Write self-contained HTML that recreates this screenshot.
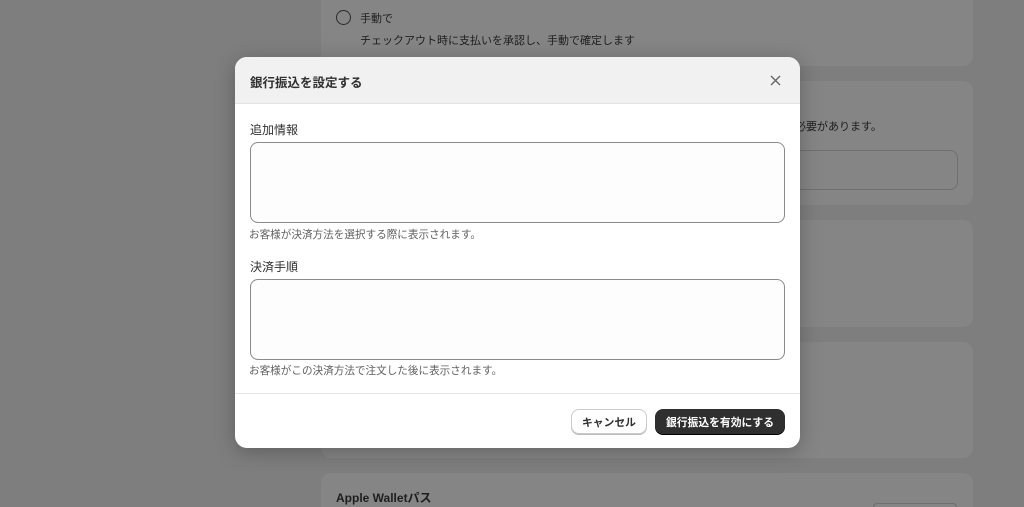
<!DOCTYPE html>
<html><head><meta charset="utf-8"><style>
*{box-sizing:border-box;margin:0;padding:0}
html,body{width:1024px;height:507px;overflow:hidden}
body{background:#7e7e7e;font-family:"Liberation Sans","Noto Sans CJK JP",sans-serif;position:relative}
.card{position:absolute;left:321px;width:652px;background:#858585;border-radius:10px}
.t{position:absolute;color:#1e1e1e;font-size:11px}
.modal{position:absolute;left:235px;top:57px;width:565px;height:391px;background:#fff;border-radius:12px;overflow:hidden;box-shadow:0 4px 20px rgba(0,0,0,.25)}
.hd{height:47px;background:#f1f1f1;border-bottom:1px solid #e3e3e3;position:relative}
.hd h1{position:absolute;left:15px;top:15px;font-size:12.5px;font-weight:bold;color:#303030}
.x{position:absolute;right:19px;top:18px}
.lbl{position:absolute;left:15px;font-size:12px;color:#303030}
.ta{position:absolute;left:15px;width:535px;height:81px;border:1px solid #8a8a8a;border-radius:8px;background:#fdfdfd}
.help{position:absolute;left:14px;font-size:10.6px;color:#616161}
.ft{position:absolute;left:0;top:336px;width:100%;border-top:1px solid #e3e3e3}
.btn{position:absolute;top:352px;height:25px;border-radius:8px;font-size:10.8px;font-weight:bold;display:flex;align-items:center;justify-content:center}
</style></head><body>
<div class="card" style="top:0;height:66px;border-radius:0 0 10px 10px"></div>
<div style="position:absolute;left:336px;top:10px;width:15px;height:15px;border:1.5px solid #2a2a2a;border-radius:50%"></div>
<div class="t" style="left:360px;top:10px">手動で</div>
<div class="t" style="left:360px;top:32px">チェックアウト時に支払いを承認し、手動で確定します</div>
<div class="card" style="top:81px;height:124px"></div>
<div class="t" style="left:795px;top:118px">必要があります。</div>
<div style="position:absolute;left:780px;top:150px;width:178px;height:40px;border:1px solid #6f6f6f;border-radius:8px"></div>
<div class="card" style="top:220px;height:107px"></div>
<div class="card" style="top:342px;height:116px"></div>
<div class="card" style="top:473px;height:34px;border-radius:10px 10px 0 0"></div>
<div class="t" style="left:336px;top:489px;font-weight:bold;font-size:12px">Apple Walletパス</div>
<div style="position:absolute;left:873px;top:503px;width:84px;height:4px;border:1px solid #6f6f6f;border-bottom:none;border-radius:8px 8px 0 0"></div>
<div class="modal">
<div class="hd"><h1>銀行振込を設定する</h1>
<svg class="x" width="11" height="11" viewBox="0 0 11 11"><path d="M1 1L10 10M10 1L1 10" stroke="#666" stroke-width="1.4"/></svg></div>
<div class="lbl" style="top:64px">追加情報</div>
<div class="ta" style="top:85px"></div>
<div class="help" style="top:170px">お客様が決済方法を選択する際に表示されます。</div>
<div class="lbl" style="top:201px">決済手順</div>
<div class="ta" style="top:222px"></div>
<div class="help" style="top:306px">お客様がこの決済方法で注文した後に表示されます。</div>
<div class="ft"></div>
<div class="btn" style="left:336px;width:76px;border:1px solid #ccc;color:#303030;background:#fff;box-shadow:0 1px 0 #bbb">キャンセル</div>
<div class="btn" style="left:420px;width:130px;background:#2f2f2f;color:#fff;box-shadow:0 1px 0 #000">銀行振込を有効にする</div>
</div>
</body></html>
